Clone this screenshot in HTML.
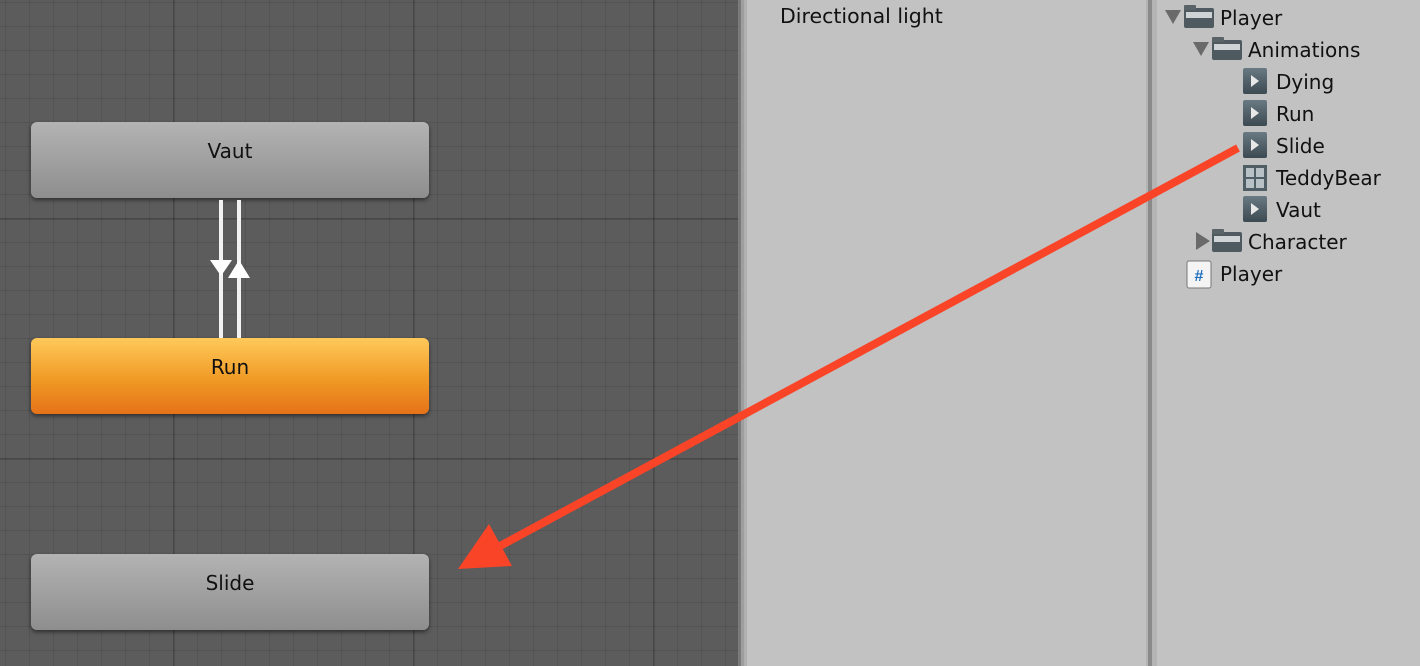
<!DOCTYPE html>
<html><head><style>
html,body{margin:0;padding:0;}
body{width:1420px;height:666px;position:relative;overflow:hidden;font-family:"DejaVu Sans",sans-serif;background:#c2c2c2;}
#graph{position:absolute;left:0;top:0;width:738px;height:666px;background-color:#5c5c5c;
background-image:
linear-gradient(to right,rgba(0,0,0,0.14) 2px,transparent 2px),
linear-gradient(to bottom,rgba(0,0,0,0.14) 2px,transparent 2px),
linear-gradient(to right,rgba(0,0,0,0.09) 1px,transparent 1px),
linear-gradient(to bottom,rgba(0,0,0,0.09) 1px,transparent 1px);
background-size:240px 240px,240px 240px,24px 24px,24px 24px;
background-position:173px 0,0 218px,5px 0,0 2px;}
.band{position:absolute;top:0;height:666px;}
.node{position:absolute;left:31px;width:398px;height:76px;border-radius:6px;box-shadow:0 2px 4px rgba(0,0,0,0.5);text-align:center;font-size:20px;line-height:58px;color:#111;}
.gray{background:linear-gradient(#b3b3b3,#8e8e8e);}
.orange{background:linear-gradient(#ffc95a,#f09a25 55%,#e57219);}
.row{position:absolute;font-size:20px;color:#111;height:30px;line-height:30px;}
.anim{position:absolute;width:24px;height:26px;background:linear-gradient(#6a7a82,#3c4a52);border-radius:2px;}
.anim:after{content:"";position:absolute;left:8px;top:7px;border-left:8px solid #e8e8e8;border-top:6px solid transparent;border-bottom:6px solid transparent;}
</style></head><body>
<div id="graph"></div>
<div class="band" style="left:738px;width:3px;background:#7a7a7a"></div>
<div class="band" style="left:741px;width:3px;background:#9e9e9e"></div>
<div class="band" style="left:744px;width:3px;background:#b0b0b0"></div>
<div class="band" style="left:1146px;width:2px;background:#b4b4b4"></div>
<div class="band" style="left:1148px;width:4px;background:#8a8a8a"></div>
<div class="band" style="left:1152px;width:5px;background:#b4b4b4"></div>

<div class="node gray" style="top:122px">Vaut</div>
<div class="node orange" style="top:338px">Run</div>
<div class="node gray" style="top:554px">Slide</div>

<svg style="position:absolute;left:0;top:0" width="1420" height="666">
<line x1="221" y1="200" x2="221" y2="338" stroke="#f2f2f2" stroke-width="4"/>
<line x1="239" y1="200" x2="239" y2="338" stroke="#f2f2f2" stroke-width="4"/>
<polygon points="210,260 232,260 221,276" fill="#fff"/>
<polygon points="228,278 250,278 239,260" fill="#fff"/>
<line x1="1238" y1="148" x2="500" y2="546" stroke="#fa4427" stroke-width="8"/>
<polygon points="458,569 489,524 512,566" fill="#fa4427"/>
<polygon points="1165,10 1181,10 1173,24" fill="#6a6a6a"/>
<polygon points="1193,42 1209,42 1201,56" fill="#6a6a6a"/>
<polygon points="1196,232 1196,250 1210,241" fill="#6a6a6a"/>
<g>
<rect x="1184" y="8" width="30" height="20" rx="2" fill="#4e5a60"/><rect x="1186" y="12" width="26" height="6" fill="#cfd3d5"/><rect x="1184" y="5" width="12" height="5" rx="1" fill="#5a6468"/>
<rect x="1212" y="40" width="30" height="20" rx="2" fill="#4e5a60"/><rect x="1214" y="44" width="26" height="6" fill="#cfd3d5"/><rect x="1212" y="37" width="12" height="5" rx="1" fill="#5a6468"/>
<rect x="1212" y="232" width="30" height="20" rx="2" fill="#4e5a60"/><rect x="1214" y="236" width="26" height="6" fill="#cfd3d5"/><rect x="1212" y="229" width="12" height="5" rx="1" fill="#5a6468"/>
<rect x="1187" y="261" width="24" height="27" rx="2" fill="#f4f4f4" stroke="#777"/>
<text x="1199" y="281" font-size="16" font-family="Liberation Sans" text-anchor="middle" fill="#1e6fbf" font-weight="bold">#</text>
<rect x="1243" y="165" width="24" height="26" fill="#4f5d64"/><rect x="1246" y="168" width="8" height="9" fill="#b8c2c6"/><rect x="1256" y="168" width="8" height="9" fill="#b8c2c6"/><rect x="1246" y="179" width="8" height="9" fill="#b8c2c6"/><rect x="1256" y="179" width="8" height="9" fill="#b8c2c6"/>
</g>
</svg>
<div class="row" style="left:780px;top:1px;font-size:20.5px">Directional light</div>
<div class="row" style="left:1220px;top:3px">Player</div>
<div class="row" style="left:1248px;top:35px">Animations</div>
<div class="anim" style="left:1243px;top:68px"></div><div class="row" style="left:1276px;top:67px">Dying</div>
<div class="anim" style="left:1243px;top:100px"></div><div class="row" style="left:1276px;top:99px">Run</div>
<div class="anim" style="left:1243px;top:132px"></div><div class="row" style="left:1276px;top:131px">Slide</div>
<div class="row" style="left:1276px;top:163px">TeddyBear</div>
<div class="anim" style="left:1243px;top:196px"></div><div class="row" style="left:1276px;top:195px">Vaut</div>
<div class="row" style="left:1248px;top:227px">Character</div>
<div class="row" style="left:1220px;top:259px">Player</div>
</body></html>
